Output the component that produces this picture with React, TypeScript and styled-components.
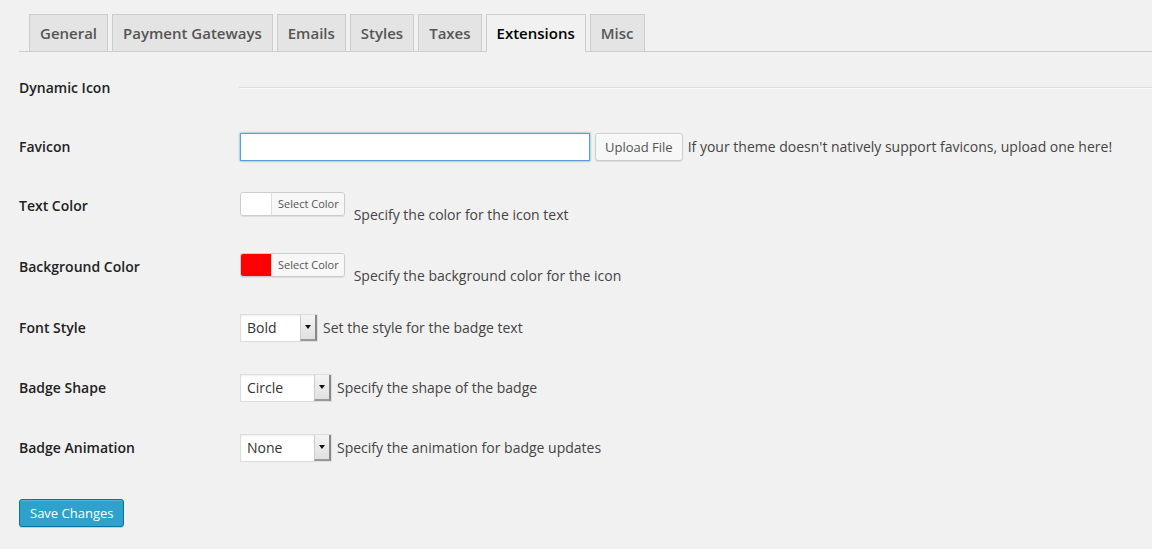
import React from "react";
import styled, { createGlobalStyle } from "styled-components";

const Global = createGlobalStyle`
  html, body { margin: 0; padding: 0; background: #f1f1f1; }
  body { font-family: "Open Sans", "Noto Sans", sans-serif; color: #444; font-size: 13px; }
`;

const Page = styled.div`
  width: 1152px;
  height: 549px;
  overflow: hidden;
  padding: 14px 0 0 19px;
  box-sizing: border-box;
`;

const TabBar = styled.div`
  display: flex;
  gap: 4px;
  padding-left: 10px;
  border-bottom: 1px solid #ccc;
  height: 37px;
`;

const Tab = styled.div<{ $active?: boolean }>`
  box-sizing: border-box;
  height: ${(p) => (p.$active ? "38px" : "37px")};
  padding: 6px 10px;
  border: 1px solid #ccc;
  border-bottom: none;
  background: ${(p) => (p.$active ? "#f1f1f1" : "#e4e4e4")};
  color: ${(p) => (p.$active ? "#000" : "#555")};
  font-size: 15px;
  font-weight: 600;
  line-height: 24px;
  white-space: nowrap;
`;

const Form = styled.div`
  display: flex;
  flex-direction: column;
  padding-top: 7px;
`;

const Row = styled.div<{ $h: number }>`
  display: grid;
  grid-template-columns: 220px 1fr;
  align-items: center;
  height: ${(p) => p.$h}px;
`;

const Label = styled.div`
  font-size: 14px;
  font-weight: 600;
  color: #222;
  line-height: 18px;
`;

const Field = styled.div<{ $align?: string; $gap?: number; $padTop?: number }>`
  display: flex;
  align-items: ${(p) => p.$align || "center"};
  gap: ${(p) => p.$gap ?? 5}px;
  padding-top: ${(p) => p.$padTop || 0}px;
`;

const Rule = styled.div`
  flex: 1;
  height: 0;
  border-top: 1px solid #ddd;
  border-bottom: 1px solid #fafafa;
`;

const TextInput = styled.div`
  box-sizing: border-box;
  width: 350px;
  height: 28px;
  margin-left: 1px;
  background: #fff;
  border: 1px solid #5b9dd9;
  box-shadow: 0 0 2px rgba(30, 140, 190, 0.8);
`;

const Button = styled.div`
  box-sizing: border-box;
  height: 28px;
  padding: 0 9px;
  border: 1px solid #ccc;
  border-radius: 3px;
  background: #f7f7f7;
  color: #555;
  font-size: 13px;
  line-height: 26px;
  box-shadow: inset 0 1px 0 #fff, 0 1px 0 rgba(0, 0, 0, 0.08);
  white-space: nowrap;
`;

const Desc = styled.span<{ $drop?: number }>`
  font-size: 14px;
  color: #444;
  line-height: 18px;
  white-space: nowrap;
  margin-top: ${(p) => p.$drop || 0}px;
`;

const ColorPicker = styled.div`
  display: flex;
  box-sizing: border-box;
  height: 24px;
  margin-left: 1px;
  border: 1px solid #ccc;
  border-radius: 3px;
  overflow: hidden;
  box-shadow: 0 1px 0 rgba(0, 0, 0, 0.08);
`;

const Swatch = styled.div<{ $color: string }>`
  width: 30px;
  background: ${(p) => p.$color};
`;

const PickerLabel = styled.div`
  background: #f7f7f7;
  border-left: 1px solid #ddd;
  color: #555;
  font-size: 11px;
  line-height: 22px;
  padding: 0 5px 0 6px;
  white-space: nowrap;
`;

const Select = styled.div<{ $w: number }>`
  display: flex;
  box-sizing: border-box;
  width: ${(p) => p.$w}px;
  height: 28px;
  margin-left: 1px;
  background: #fff;
  border: 1px solid #ddd;
  box-shadow: inset 0 1px 2px rgba(0, 0, 0, 0.07);
`;

const SelectText = styled.div`
  flex: 1;
  padding-left: 6px;
  font-size: 14px;
  line-height: 26px;
  color: #333;
`;

const SelectArrow = styled.div`
  width: 14px;
  display: flex;
  align-items: center;
  justify-content: center;
  background: linear-gradient(#f4f4f4, #e0e0e0);
  border-left: 1px solid #ccc;
  border-right: 2px solid #888;
  border-bottom: 2px solid #999;
  &::after {
    content: "";
    border-left: 3px solid transparent;
    border-right: 3px solid transparent;
    border-top: 4px solid #111;
  }
`;

const Submit = styled.div`
  display: inline-block;
  box-sizing: border-box;
  margin-top: 21px;
  height: 28px;
  padding: 0 10px;
  background: #2ea2cc;
  border: 1px solid #0074a2;
  border-radius: 3px;
  color: #fff;
  font-size: 13px;
  line-height: 26px;
  box-shadow: inset 0 1px 0 rgba(120, 200, 230, 0.5), 0 1px 0 rgba(0, 0, 0, 0.15);
`;

const tabs = ["General", "Payment Gateways", "Emails", "Styles", "Taxes", "Extensions", "Misc"];

const SelectField = ({ value, w, desc }: { value: string; w: number; desc: string }) => (
  <Field>
    <Select $w={w}>
      <SelectText>{value}</SelectText>
      <SelectArrow />
    </Select>
    <Desc>{desc}</Desc>
  </Field>
);

const ColorField = ({ color, desc }: { color: string; desc: string }) => (
  <Field $align="flex-start" $gap={9} $padTop={4}>
    <ColorPicker>
      <Swatch $color={color} />
      <PickerLabel>Select Color</PickerLabel>
    </ColorPicker>
    <Desc $drop={14}>{desc}</Desc>
  </Field>
);

export default function App() {
  return (
    <>
      <Global />
      <Page>
        <TabBar>
          {tabs.map((t) => (
            <Tab key={t} $active={t === "Extensions"}>
              {t}
            </Tab>
          ))}
        </TabBar>
        <Form>
          <Row $h={58}>
            <Label>Dynamic Icon</Label>
            <Field>
              <Rule />
            </Field>
          </Row>
          <Row $h={59}>
            <Label>Favicon</Label>
            <Field>
              <TextInput />
              <Button>Upload File</Button>
              <Desc>If your theme doesn't natively support favicons, upload one here!</Desc>
            </Field>
          </Row>
          <Row $h={60}>
            <Label>Text Color</Label>
            <ColorField color="#fff" desc="Specify the color for the icon text" />
          </Row>
          <Row $h={61}>
            <Label>Background Color</Label>
            <ColorField color="#ff0000" desc="Specify the background color for the icon" />
          </Row>
          <Row $h={61}>
            <Label>Font Style</Label>
            <SelectField value="Bold" w={78} desc="Set the style for the badge text" />
          </Row>
          <Row $h={60}>
            <Label>Badge Shape</Label>
            <SelectField value="Circle" w={92} desc="Specify the shape of the badge" />
          </Row>
          <Row $h={60}>
            <Label>Badge Animation</Label>
            <SelectField value="None" w={92} desc="Specify the animation for badge updates" />
          </Row>
        </Form>
        <Submit>Save Changes</Submit>
      </Page>
    </>
  );
}
